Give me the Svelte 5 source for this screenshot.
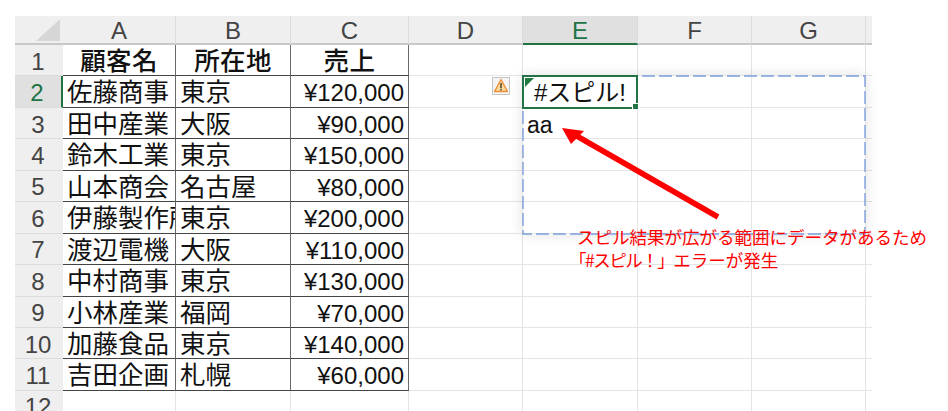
<script lang="ts">
	const cols = ['A', 'B', 'C', 'D', 'E', 'F', 'G'];
	const data = [
		['佐藤商事', '東京', '¥120,000'],
		['田中産業', '大阪', '¥90,000'],
		['鈴木工業', '東京', '¥150,000'],
		['山本商会', '名古屋', '¥80,000'],
		['伊藤製作所', '東京', '¥200,000'],
		['渡辺電機', '大阪', '¥110,000'],
		['中村商事', '東京', '¥130,000'],
		['小林産業', '福岡', '¥70,000'],
		['加藤食品', '東京', '¥140,000'],
		['吉田企画', '札幌', '¥60,000']
	];
	const blankCols = [0, 1, 2, 3];
</script>

<div class="page">
	<div class="sheet">
		<!-- header row -->
		<div class="corner"><span class="tri"></span></div>
		{#each cols as c (c)}
			<div class="colhead" class:sel={c === 'E'}>{c}</div>
		{/each}
		<div class="colhead stub"></div>

		<!-- row 1 -->
		<div class="rowhead">1</div>
		<div class="cell data title">顧客名</div>
		<div class="cell data title">所在地</div>
		<div class="cell data title">売上</div>
		{#each blankCols as b (b)}<div class="cell"></div>{/each}
		<div class="cell stub"></div>

		<!-- rows 2 to 11 -->
		{#each data as row, i (i)}
			<div class="rowhead" class:sel={i === 0}>{i + 2}</div>
			<div class="cell data">{row[0]}</div>
			<div class="cell data">{row[1]}</div>
			<div class="cell data num">{row[2]}</div>
			{#each blankCols as b (b)}
				<div class="cell plain">
					{#if i === 1 && b === 1}aa{/if}
				</div>
			{/each}
			<div class="cell stub"></div>
		{/each}

		<!-- row 12, cut off by the window -->
		<div class="rowhead">12</div>
		{#each cols as c (c)}<div class="cell"></div>{/each}
		<div class="cell stub"></div>

		<!-- spill range -->
		<svg class="spill" width="344" height="160" viewBox="0 0 344 160">
			<rect x="1" y="1" width="342" height="158" fill="none" stroke="#7c9edb" stroke-width="1.4" stroke-dasharray="13 4" />
		</svg>

		<!-- active cell E2 -->
		<div class="active">
			<span class="flag"></span>
			#スピル!
			<span class="handle"></span>
		</div>

		<!-- error indicator -->
		<div class="warn">
			<svg width="18" height="18" viewBox="0 0 18 18">
				<rect x="0.5" y="0.5" width="17" height="17" fill="#f4f4f4" stroke="#c4c4c4" />
				<path d="M9 2.5 L15.5 14.5 H2.5 Z" fill="#fbd99a" stroke="#e8913a" stroke-width="1.4" stroke-linejoin="round" />
				<rect x="8.2" y="6" width="1.6" height="5" fill="#5a4a3a" />
				<rect x="8.2" y="11.8" width="1.6" height="1.6" fill="#5a4a3a" />
			</svg>
		</div>

		<!-- callout -->
		<svg class="arrow" width="180" height="110" viewBox="0 0 180 110">
			<line x1="160" y1="93" x2="17" y2="11" stroke="#ff0000" stroke-width="5.5" />
			<polygon points="4,4 26,7 13,20" fill="#ff0000" />
		</svg>
		<div class="note">
			スピル結果が広がる範囲にデータがあるため<br />
			<span class="tight">「#スピル！」</span>エラーが発生
		</div>
	</div>
</div>

<style>
	:global(body) {
		margin: 0;
		background: #fff;
	}
	.page {
		width: 948px;
		height: 411px;
		overflow: hidden;
		padding: 16px 0 0 15px;
		box-sizing: border-box;
	}
	.sheet {
		position: relative;
		display: grid;
		grid-template-columns: 48px 113px 115px 118px 114px 115px 114px 114px 6px;
		grid-template-rows: 29px repeat(11, 31.45px) 31px;
		width: 857px;
		font-family: 'Liberation Sans', 'Noto Sans CJK JP', sans-serif;
		font-size: 24px;
		color: #111;
	}
	.corner {
		position: relative;
		background: #efefef;
		border-bottom: 2px solid #c8c8c8;
		box-sizing: border-box;
	}
	.tri {
		position: absolute;
		right: 3px;
		bottom: 2px;
		border-style: solid;
		border-width: 0 0 22px 24px;
		border-color: transparent transparent #d6d6d6 transparent;
	}
	.colhead {
		display: flex;
		align-items: center;
		justify-content: center;
		background: #efefef;
		color: #444;
		border-right: 1px solid #dcdcdc;
		border-bottom: 2px solid #c8c8c8;
		box-sizing: border-box;
		font-size: 24px;
		line-height: 1;
		padding-top: 3px;
	}
	.colhead.sel {
		background: #e0e0e0;
		color: #217346;
		border-bottom-color: #217346;
	}
	.colhead.stub {
		border-right: 0;
	}
	.rowhead {
		display: flex;
		align-items: center;
		justify-content: center;
		background: #efefef;
		color: #444;
		border-bottom: 1px solid #dcdcdc;
		box-sizing: border-box;
		padding: 3px 2px 0 0;
		line-height: 1;
	}
	.rowhead.sel {
		background: #e0e0e0;
		color: #217346;
		border-right: 2px solid #217346;
	}
	.cell {
		border-right: 1px solid #e4e4e4;
		border-bottom: 1px solid #e4e4e4;
		box-sizing: border-box;
		overflow: hidden;
		white-space: nowrap;
		line-height: 31px;
	}
	.cell.stub {
		border-right: 0;
	}
	.cell.plain {
		padding: 2px 0 0 4px;
		line-height: 30px;
		font-size: 23px;
	}
	.data {
		border-right: 1.5px solid #6a6a6a;
		border-bottom: 1px solid #444;
		padding: 1px 4px 0 4px;
		font-size: 25.5px;
	}
	.title {
		text-align: center;
		font-weight: 500;
		letter-spacing: 0.4px;
	}
	.num {
		text-align: right;
		font-size: 24px;
	}
	.spill {
		position: absolute;
		left: 507px;
		top: 59px;
		box-shadow: 0 0 12px rgba(0, 0, 0, 0.12);
	}
	.active {
		position: absolute;
		left: 507px;
		top: 59px;
		width: 116px;
		height: 34px;
		box-sizing: border-box;
		border: 2px solid #217346;
		background: #fff;
		text-align: center;
		line-height: 32px;
		font-size: 24px;
		white-space: nowrap;
	}
	.flag {
		position: absolute;
		left: 1px;
		top: 1px;
		border-style: solid;
		border-width: 9px 9px 0 0;
		border-color: #1e7a3c transparent transparent transparent;
	}
	.handle {
		position: absolute;
		right: -3px;
		bottom: -3px;
		width: 5px;
		height: 5px;
		background: #217346;
		border: 1px solid #fff;
	}
	.warn {
		position: absolute;
		left: 477px;
		top: 61px;
		line-height: 0;
	}
	.arrow {
		position: absolute;
		left: 543px;
		top: 108px;
	}
	.note {
		position: absolute;
		left: 562px;
		top: 209px;
		color: #ff0000;
		font-family: 'Noto Sans CJK JP', sans-serif;
		font-size: 17.5px;
		line-height: 23px;
		white-space: nowrap;
	}
	.tight {
		margin-left: -8px;
		letter-spacing: -1.5px;
	}
</style>
